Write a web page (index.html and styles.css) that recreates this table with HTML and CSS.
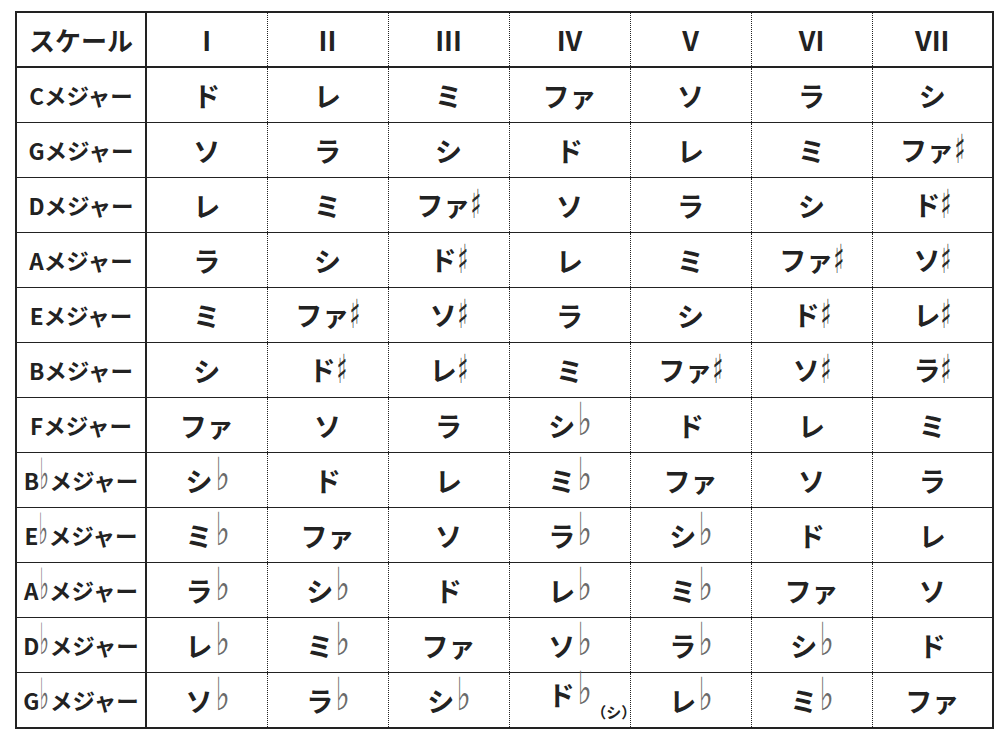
FILE: index.html
```html
<!DOCTYPE html>
<html lang="ja">
<head>
<meta charset="utf-8">
<title>スケール</title>
<link rel="stylesheet" href="styles.css">
</head>
<body>
<table class="scales">
  <colgroup>
    <col class="c-label">
    <col class="c-deg"><col class="c-deg"><col class="c-deg"><col class="c-deg"><col class="c-deg"><col class="c-deg"><col class="c-deg">
  </colgroup>
  <thead>
    <tr>
      <th class="label head-label">スケール</th>
      <th>I</th><th>II</th><th>III</th><th>IV</th><th>V</th><th>VI</th><th>VII</th>
    </tr>
  </thead>
  <tbody>
    <tr><th class="label">Cメジャー</th><td>ド</td><td>レ</td><td>ミ</td><td>ファ</td><td>ソ</td><td>ラ</td><td>シ</td></tr>
    <tr><th class="label">Gメジャー</th><td>ソ</td><td>ラ</td><td>シ</td><td>ド</td><td>レ</td><td>ミ</td><td>ファ<span class="sh">♯</span></td></tr>
    <tr><th class="label">Dメジャー</th><td>レ</td><td>ミ</td><td>ファ<span class="sh">♯</span></td><td>ソ</td><td>ラ</td><td>シ</td><td>ド<span class="sh">♯</span></td></tr>
    <tr><th class="label">Aメジャー</th><td>ラ</td><td>シ</td><td>ド<span class="sh">♯</span></td><td>レ</td><td>ミ</td><td>ファ<span class="sh">♯</span></td><td>ソ<span class="sh">♯</span></td></tr>
    <tr><th class="label">Eメジャー</th><td>ミ</td><td>ファ<span class="sh">♯</span></td><td>ソ<span class="sh">♯</span></td><td>ラ</td><td>シ</td><td>ド<span class="sh">♯</span></td><td>レ<span class="sh">♯</span></td></tr>
    <tr><th class="label">Bメジャー</th><td>シ</td><td>ド<span class="sh">♯</span></td><td>レ<span class="sh">♯</span></td><td>ミ</td><td>ファ<span class="sh">♯</span></td><td>ソ<span class="sh">♯</span></td><td>ラ<span class="sh">♯</span></td></tr>
    <tr><th class="label">Fメジャー</th><td>ファ</td><td>ソ</td><td>ラ</td><td>シ<span class="fl">♭</span></td><td>ド</td><td>レ</td><td>ミ</td></tr>
    <tr><th class="label">B<span class="fl lbl">♭</span>メジャー</th><td>シ<span class="fl">♭</span></td><td>ド</td><td>レ</td><td>ミ<span class="fl">♭</span></td><td>ファ</td><td>ソ</td><td>ラ</td></tr>
    <tr><th class="label">E<span class="fl lbl">♭</span>メジャー</th><td>ミ<span class="fl">♭</span></td><td>ファ</td><td>ソ</td><td>ラ<span class="fl">♭</span></td><td>シ<span class="fl">♭</span></td><td>ド</td><td>レ</td></tr>
    <tr><th class="label">A<span class="fl lbl">♭</span>メジャー</th><td>ラ<span class="fl">♭</span></td><td>シ<span class="fl">♭</span></td><td>ド</td><td>レ<span class="fl">♭</span></td><td>ミ<span class="fl">♭</span></td><td>ファ</td><td>ソ</td></tr>
    <tr><th class="label">D<span class="fl lbl">♭</span>メジャー</th><td>レ<span class="fl">♭</span></td><td>ミ<span class="fl">♭</span></td><td>ファ</td><td>ソ<span class="fl">♭</span></td><td>ラ<span class="fl">♭</span></td><td>シ<span class="fl">♭</span></td><td>ド</td></tr>
    <tr><th class="label">G<span class="fl lbl">♭</span>メジャー</th><td>ソ<span class="fl">♭</span></td><td>ラ<span class="fl">♭</span></td><td>シ<span class="fl">♭</span></td><td>ド<span class="fl">♭</span><span class="alt">（シ）</span></td><td>レ<span class="fl">♭</span></td><td>ミ<span class="fl">♭</span></td><td>ファ</td></tr>
  </tbody>
</table>
</body>
</html>
```

FILE: styles.css
```css
html, body {
  margin: 0;
  padding: 0;
  background: #ffffff;
}

body {
  font-family: "Noto Sans CJK JP", "Noto Sans", sans-serif;
  color: #222222;
}

.scales {
  border-collapse: collapse;
  table-layout: fixed;
  width: 979px;
  margin: 11px 0 0 15px;
  border: 2px solid #222222;
}

.c-label { width: 130px; }
.c-deg { width: 121px; }

.scales th,
.scales td {
  height: 54px;
  padding: 0;
  text-align: center;
  vertical-align: middle;
  font-weight: 700;
  border-bottom: 1px solid #222222;
  border-left: 1px dotted #222222;
  white-space: nowrap;
}

.scales td {
  font-size: 27px;
  line-height: 1;
}

.scales thead th {
  height: 53px;
  font-size: 27px;
  line-height: 1;
  border-bottom: 2px solid #222222;
}

.scales .label {
  font-size: 22.5px;
  line-height: 1;
  border-right: 2px solid #222222;
  border-left: 2px solid #222222;
}

.scales .head-label {
  font-size: 26px;
}

.sh,
.fl {
  display: inline-block;
  font-family: "DejaVu Sans", sans-serif;
  font-weight: 400;
  line-height: 1;
}

.sh {
  font-size: 20px;
  color: #2a2a2a;
  margin-left: 1px;
  transform: scale(1.1, 2);
  transform-origin: 50% 75%;
}

.fl {
  font-size: 24px;
  color: #6a6a6a;
  margin-left: 4px;
  vertical-align: 2px;
  transform: scale(1.25, 1.9);
  transform-origin: 50% 85%;
}

.fl.lbl {
  font-size: 18px;
  margin-left: 1px;
  margin-right: 1px;
  vertical-align: 1px;
  transform: scale(1.1, 2.4);
  transform-origin: 50% 85%;
}

.alt {
  display: inline-block;
  width: 0;
  font-size: 15px;
  text-align: left;
  vertical-align: -12px;
  margin-left: 1px;
}
```
